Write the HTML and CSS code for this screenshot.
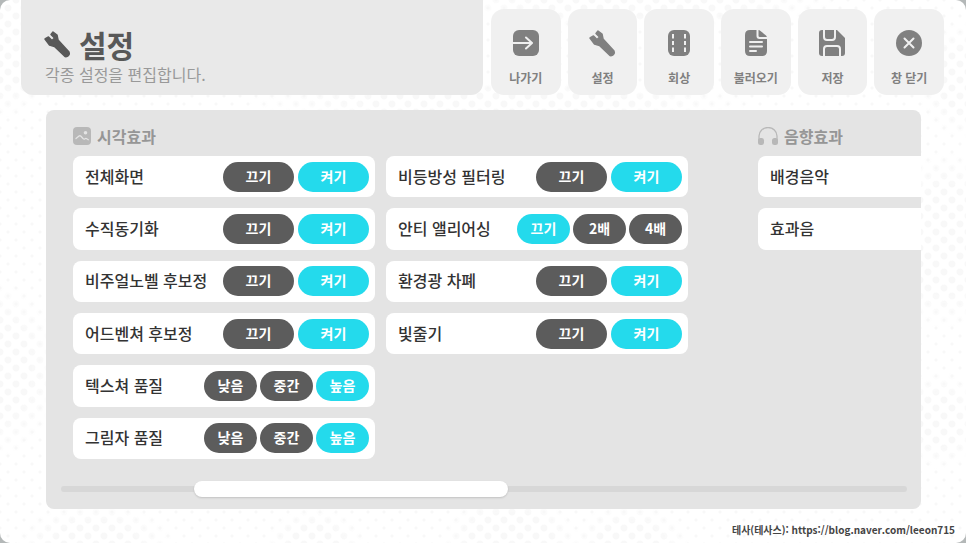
FILE: index.html
```
<!DOCTYPE html>
<html lang="ko">
<head>
  <meta charset="UTF-8" />
  <meta name="viewport" content="width=device-width, initial-scale=1" />
  <title>설정</title>
  <link rel="stylesheet" href="styles.css">
</head>
<body>
  <div class="screen">
    <header class="top">
      <div class="title-box">
        <h1>
          <svg class="title-icon" viewBox="0 0 28 28"><path d="M2 9l3.500-2L9 10.500 11.500 8 8 4.500 10 2l4 3 1 5L26 22q1 2-.5 3.500T22 26.500L11.500 16.500 6.500 15z" fill="currentColor" stroke="currentColor" stroke-width="1.500" stroke-linejoin="round"/></svg>
          설정
        </h1>
        <p>각종 설정을 편집합니다.</p>
      </div>
      <nav class="menu">
        <button type="button">
          <svg viewBox="0 0 28 28"><rect x="1" y="1" width="26" height="26" rx="6" fill="currentColor"/><path d="M0 14h19M14 8.500l6 5.500-6 5.500" fill="none" stroke="#f0f0f0" stroke-width="2" stroke-linecap="round" stroke-linejoin="round"/></svg>
          나가기
        </button>
        <button type="button">
          <svg viewBox="0 0 28 28"><path d="M2 9l3.500-2L9 10.500 11.500 8 8 4.500 10 2l4 3 1 5L26 22q1 2-.5 3.500T22 26.500L11.500 16.500 6.500 15z" fill="currentColor" stroke="currentColor" stroke-width="1.500" stroke-linejoin="round"/></svg>
          설정
        </button>
        <button type="button">
          <svg viewBox="0 0 28 28"><rect x="3" y="1" width="22" height="26" rx="6" fill="currentColor"/><path d="M8 5v4.500M8 12v4M8 18.500V23M20 5v4.500M20 12v4M20 18.500V23" stroke="#f0f0f0" stroke-width="2"/></svg>
          회상
        </button>
        <button type="button">
          <svg viewBox="0 0 28 28"><path d="M8 1h6.500v6q0 3 3 3H25v12q0 5-5 5H8q-5 0-5-5V6q0-5 5-5z" fill="currentColor"/><path d="M16.500 1q1 0 2 1l5.500 4.500q.8.8.8 1.500h-7q-1.300 0-1.300-1.300z" fill="currentColor"/><path d="M8 13h12M8 17.500h12M8 22h6" stroke="#f0f0f0" stroke-width="2" stroke-linecap="round"/></svg>
          불러오기
        </button>
        <button type="button">
          <svg viewBox="0 0 28 28"><path d="M4 1h15l8 8v15q0 3-3 3H4q-3 0-3-3V4q0-3 3-3z" fill="currentColor"/><path d="M6 0v8q0 3 3 3h5q3 0 3-3V0M6 28V20q0-3 3-3h10q3 0 3 3v8" fill="none" stroke="#f0f0f0" stroke-width="2"/></svg>
          저장
        </button>
        <button type="button">
          <svg viewBox="0 0 28 28"><circle cx="14" cy="14" r="13" fill="currentColor"/><path d="M9.500 9.500l9 9M18.500 9.500l-9 9" stroke="#f0f0f0" stroke-width="2" stroke-linecap="round"/></svg>
          창 닫기
        </button>
      </nav>
    </header>

    <main class="panel">
      <div class="sections">
        <section class="visual">
          <h2>
            <svg viewBox="0 0 18 18"><rect width="18" height="18" rx="4" fill="currentColor"/><path d="M3 11.500l3-2.500q1-.7 2 .3l2 2.200q1 1 2 .2.800-.7 1.800 0l1.500 1" fill="none" stroke="#e4e4e4" stroke-width="1.300" stroke-linecap="round"/><circle cx="12.500" cy="5.800" r="1.800" fill="#e4e4e4"/></svg>
            시각효과
          </h2>
          <div class="rows">
            <div class="row"><span>전체화면</span><div class="options two"><button type="button">끄기</button><button type="button" class="on">켜기</button></div></div>
            <div class="row"><span>수직동기화</span><div class="options two"><button type="button">끄기</button><button type="button" class="on">켜기</button></div></div>
            <div class="row"><span>비주얼노벨 후보정</span><div class="options two"><button type="button">끄기</button><button type="button" class="on">켜기</button></div></div>
            <div class="row"><span>어드벤쳐 후보정</span><div class="options two"><button type="button">끄기</button><button type="button" class="on">켜기</button></div></div>
            <div class="row"><span>텍스쳐 품질</span><div class="options"><button type="button">낮음</button><button type="button">중간</button><button type="button" class="on">높음</button></div></div>
            <div class="row"><span>그림자 품질</span><div class="options"><button type="button">낮음</button><button type="button">중간</button><button type="button" class="on">높음</button></div></div>
            <div class="row"><span>비등방성 필터링</span><div class="options two"><button type="button">끄기</button><button type="button" class="on">켜기</button></div></div>
            <div class="row"><span>안티 앨리어싱</span><div class="options"><button type="button" class="on">끄기</button><button type="button">2배</button><button type="button">4배</button></div></div>
            <div class="row"><span>환경광 차폐</span><div class="options two"><button type="button">끄기</button><button type="button" class="on">켜기</button></div></div>
            <div class="row"><span>빛줄기</span><div class="options two"><button type="button">끄기</button><button type="button" class="on">켜기</button></div></div>
          </div>
        </section>
        <section class="sound">
          <h2>
            <svg viewBox="0 0 20 18"><path d="M1 13V9a9 8.500 0 0 1 18 0v4" fill="none" stroke="currentColor" stroke-width="1.300"/><rect y="11" width="6" height="7" rx="2.500" fill="currentColor"/><rect x="14" y="11" width="6" height="7" rx="2.500" fill="currentColor"/></svg>
            음향효과
          </h2>
          <div class="rows">
            <div class="row"><span>배경음악</span></div>
            <div class="row"><span>효과음</span></div>
          </div>
        </section>
      </div>
      <input class="scrollbar" type="range" min="0" max="100" value="25" aria-label="가로 스크롤" />
    </main>

    <footer>
      <a href="https://blog.naver.com/leeon715">테사(테사스): https://blog.naver.com/leeon715</a>
    </footer>
  </div>
</body>
</html>
```
FILE: styles.css
```
* {
  margin: 0;
  padding: 0;
  box-sizing: border-box;
}

body {
  background-color: #b4b8b8;
  font-family: "Noto Sans CJK KR", "Noto Sans", sans-serif;
}

.screen {
  position: relative;
  z-index: 0;
  min-height: 100vh;
  display: flex;
  flex-direction: column;
  background-color: #fff;
  background-image:
    radial-gradient(circle, #f8f8f8 1px, transparent 2px),
    radial-gradient(circle, #f8f8f8 1px, transparent 2px);
  background-size: 16px 16px;
  background-position: 0 0, 8px 8px;
  border-radius: 10px;
  overflow: hidden;
}

/* bigger halftone dots, only in patches */
.screen::before {
  content: "";
  position: absolute;
  inset: 0;
  z-index: -1;
  background-image:
    radial-gradient(circle, #f8f8f8 3px, transparent 4px),
    radial-gradient(circle, #f8f8f8 3px, transparent 4px);
  background-size: 16px 16px;
  background-position: 0 0, 8px 8px;
  -webkit-mask-image:
    radial-gradient(ellipse 60px 80px at 0 40px, #000 60%, transparent),
    radial-gradient(ellipse 60px 90px at 0 370px, #000 50%, transparent),
    radial-gradient(ellipse 80px 40px at 95px 100%, #000 50%, transparent),
    radial-gradient(ellipse 50px 35px at 315px 100%, #000 50%, transparent),
    radial-gradient(ellipse 70px 50px at 510px 100%, #000 60%, transparent),
    radial-gradient(ellipse 60px 40px at 630px 100%, #000 50%, transparent),
    radial-gradient(ellipse 200px 30px at 640px 0, #000 50%, transparent),
    radial-gradient(ellipse 260px 20px at 500px 102px, #000 50%, transparent),
    radial-gradient(ellipse 50px 60px at 100% 80px, #000 50%, transparent),
    radial-gradient(ellipse 60px 90px at calc(100% - 20px) 240px, #000 60%, transparent),
    radial-gradient(ellipse 40px 50px at calc(100% - 25px) 420px, #000 50%, transparent);
}

.top {
  display: flex;
  gap: 8px;
  padding: 0 22px 0 21px;
}

.title-box {
  flex: 1;
  height: 95px;
  padding: 24px 24px 0 22px;
  background-color: #e9e9e9;
  border-radius: 0 0 12px 12px;
}

.title-box h1 {
  display: flex;
  align-items: center;
  gap: 8px;
  height: 40px;
  font-size: 30px;
  line-height: 40px;
  color: #585858;
}

.title-icon {
  width: 28px;
  height: 28px;
}

.title-box p {
  padding-left: 2px;
  font-size: 16px;
  line-height: 20px;
  color: #999;
}

.menu {
  display: grid;
  grid-template-columns: repeat(6, 1fr);
  gap: 7px;
  width: 453px;
  padding-top: 9px;
}

.menu button {
  display: flex;
  flex-direction: column;
  align-items: center;
  padding-top: 20px;
  gap: 12px;
  height: 86px;
  border: none;
  border-radius: 13px;
  background-color: #f0f0f0;
  color: #808080;
  font-family: inherit;
  font-size: 12px;
  font-weight: bold;
  line-height: 18px;
  cursor: pointer;
}

.menu svg {
  width: 28px;
  height: 28px;
}

.panel {
  margin: 15px 45px 0 46px;
  padding: 14px 0 12px;
  background-color: #e4e4e4;
  border-radius: 8px;
  overflow: hidden;
}

.sections {
  display: flex;
  gap: 70px;
  padding-left: 27px;
  overflow: hidden;
}

.visual,
.sound {
  flex: none;
}

.panel h2 {
  display: flex;
  align-items: center;
  gap: 6px;
  height: 24px;
  margin-bottom: 8px;
  font-size: 16px;
  line-height: 24px;
  color: #969696;
}

.panel h2 svg {
  height: 18px;
  color: #b8b8b8;
}

.rows {
  display: grid;
  grid-template-rows: repeat(6, 1fr);
  grid-auto-flow: column;
  grid-auto-columns: 302px;
  gap: 11px;
  height: 303px;
}

.row {
  display: flex;
  align-items: center;
  justify-content: space-between;
  padding: 0 6px 0 12px;
  background-color: #fff;
  border-radius: 8px;
  font-size: 16px;
  font-weight: 500;
  line-height: 24px;
  color: #333;
}

.row span {
  padding-bottom: 2px;
}

.options {
  display: flex;
  gap: 3px;
}

.options button {
  width: 53px;
  height: 30px;
  padding-bottom: 2px;
  border: none;
  border-radius: 15px;
  background-color: #5c5c5c;
  color: #fff;
  font-family: inherit;
  font-size: 14px;
  font-weight: bold;
  line-height: 20px;
  cursor: pointer;
}

.options.two {
  gap: 4px;
}

.options.two button {
  width: 71px;
}

.options .on {
  background-color: #24daec;
}

.scrollbar {
  -webkit-appearance: none;
  appearance: none;
  display: block;
  width: calc(100% - 29px);
  height: 16px;
  margin: 22px auto 0;
  background: transparent;
}

.scrollbar::-webkit-slider-runnable-track {
  height: 6px;
  border-radius: 3px;
  background-color: #d7d7d7;
}

.scrollbar::-webkit-slider-thumb {
  -webkit-appearance: none;
  width: 314px;
  height: 16px;
  margin-top: -5px;
  border-radius: 8px;
  background-color: #fff;
  box-shadow: 0 1px 2px rgba(0, 0, 0, 0.15);
}

footer {
  padding: 13px 11px 0 0;
  text-align: right;
  font-size: 10px;
  font-weight: bold;
  line-height: 16px;
}

footer a {
  color: #444;
  text-decoration: none;
}
```
